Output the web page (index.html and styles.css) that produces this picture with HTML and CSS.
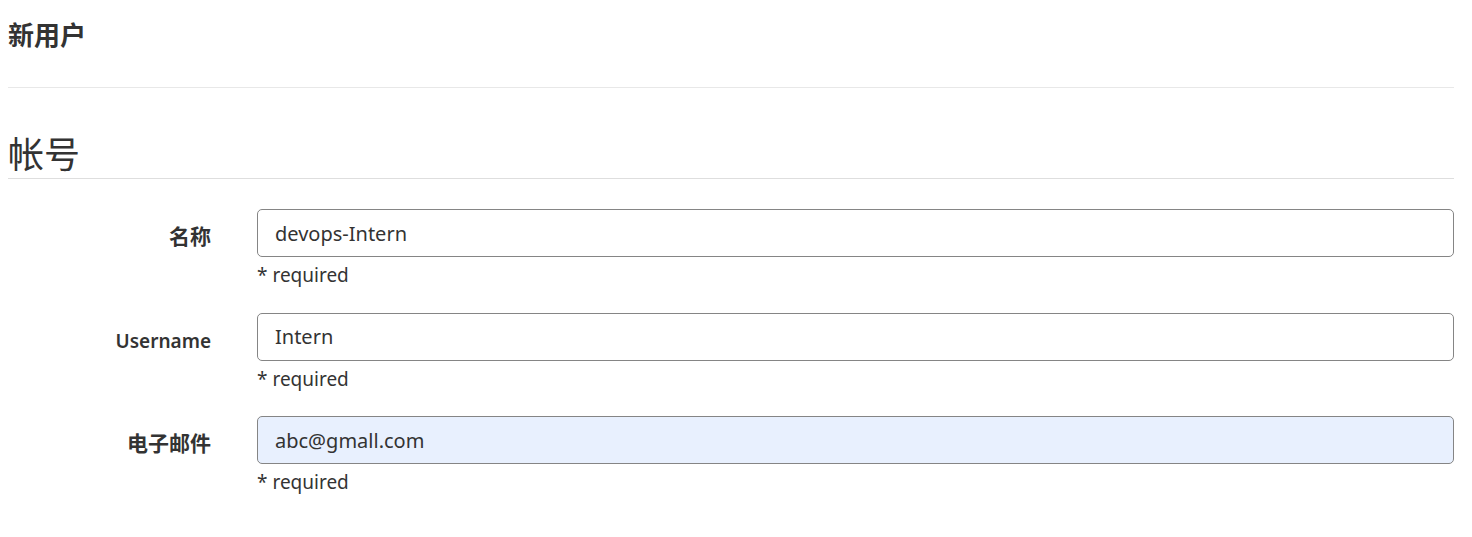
FILE: index.html
```html
<!DOCTYPE html>
<html lang="zh">
<head>
<meta charset="utf-8">
<link rel="stylesheet" href="styles.css">
</head>
<body>
<div class="page">
  <h1 class="page-title">新用户</h1>
  <div class="divider"></div>
  <h2 class="section-title">帐号</h2>
  <form class="form">
    <div class="row">
      <label class="label label-cjk">名称</label>
      <div class="field">
        <input class="input" type="text" value="devops-Intern">
        <div class="hint">* required</div>
      </div>
    </div>
    <div class="row">
      <label class="label">Username</label>
      <div class="field">
        <input class="input" type="text" value="Intern">
        <div class="hint">* required</div>
      </div>
    </div>
    <div class="row">
      <label class="label label-cjk">电子邮件</label>
      <div class="field">
        <input class="input input-autofill" type="text" value="abc@gmall.com">
        <div class="hint">* required</div>
      </div>
    </div>
  </form>
</div>
</body>
</html>
```

FILE: styles.css
```css
* { box-sizing: border-box; }
html, body { margin: 0; padding: 0; background: #fff; }
body {
  font-family: "Noto Sans", "Noto Sans CJK SC", sans-serif;
  color: #333;
}
.page {
  padding: 0 18px 0 8px;
}
.page-title {
  margin: 0;
  padding-top: 20px;
  height: 87px;
  font-size: 26px;
  font-weight: 700;
  line-height: 30px;
}
.divider {
  height: 1px;
  background: #e8e8e8;
}
.section-title {
  margin: 0;
  padding-top: 44px;
  font-size: 36px;
  font-weight: 400;
  line-height: 46px;
  border-bottom: 1px solid #dedede;
}
.form {
  padding-top: 30px;
}
.row {
  display: grid;
  grid-template-columns: 203px 1fr;
  column-gap: 46px;
  margin-bottom: 19.5px;
}
.label {
  text-align: right;
  font-size: 19px;
  font-weight: 600;
  padding-top: 13px;
  line-height: 30px;
}
.label-cjk {
  font-size: 21px;
  font-weight: 700;
  padding-top: 12px;
}
.input {
  display: block;
  width: 100%;
  height: 48px;
  border: 1px solid #858585;
  border-radius: 5px;
  padding: 0 17px 0 17px;
  font-family: "Noto Sans", "Noto Sans CJK SC", sans-serif;
  font-size: 20px;
  color: #333;
  background: #fff;
}
.input-autofill {
  background: #e8f0fe;
}
.hint {
  font-size: 19px;
  line-height: 36px;
  color: #333;
}
```
